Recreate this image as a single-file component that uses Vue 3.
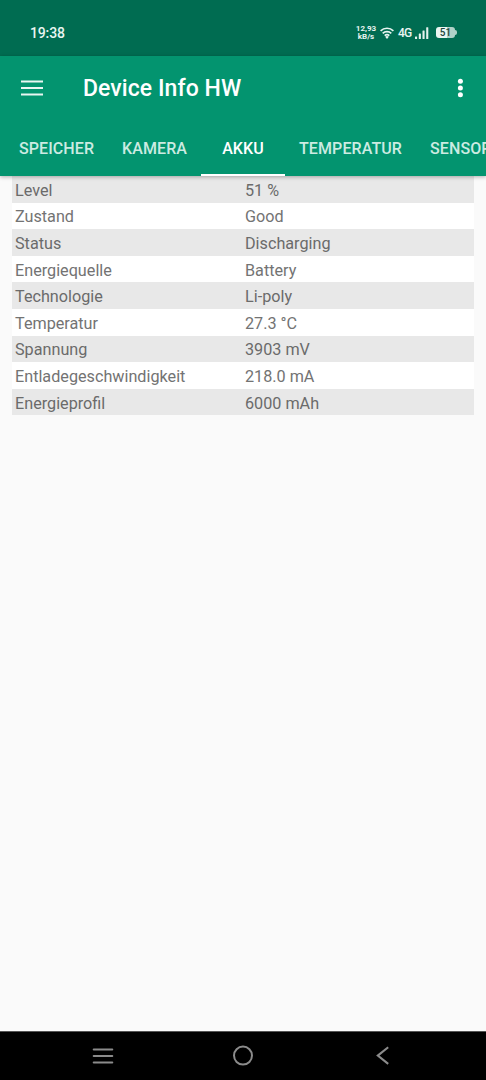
<script setup>
const tabs = [
  { name: 'SPEICHER', id: 'speicher' },
  { name: 'KAMERA', id: 'kamera' },
  { name: 'AKKU', id: 'akku', active: true },
  { name: 'TEMPERATUR', id: 'temperatur' },
  { name: 'SENSOREN', id: 'sensoren' },
]
const rows = [
  ['Level', '51 %'],
  ['Zustand', 'Good'],
  ['Status', 'Discharging'],
  ['Energiequelle', 'Battery'],
  ['Technologie', 'Li-poly'],
  ['Temperatur', '27.3 °C'],
  ['Spannung', '3903 mV'],
  ['Entladegeschwindigkeit', '218.0 mA'],
  ['Energieprofil', '6000 mAh'],
]
</script>

<template>
  <div class="screen">
    <div class="status">
      <span class="clock">19:38</span>
      <div class="indicators">
        <div class="speed"><span>12,93</span><span>kB/s</span></div>
        <svg class="wifi" width="14" height="12" viewBox="0 0 14 12" fill="none" stroke="#e9f5f1" stroke-width="1.7">
          <path d="M.6 3.8a9.3 9.3 0 0 1 12.8 0M2.7 6.3a6.2 6.2 0 0 1 8.6 0M4.7 8.6a3.4 3.4 0 0 1 4.6 0" />
          <path d="M5.2 9.7 7 11.9 8.8 9.7Q7 8.4 5.2 9.7Z" fill="#e9f5f1" stroke="none" />
        </svg>
        <span class="net">4G</span>
        <svg class="signal" width="14" height="12" viewBox="0 0 14 12" fill="#e3f2ed">
          <rect x="0" y="9.6" width="2.1" height="2.4" rx=".5" />
          <rect x="3.8" y="6.6" width="2.1" height="5.4" rx=".5" />
          <rect x="7.5" y="3.4" width="2.1" height="8.6" rx=".5" />
          <rect x="11.2" y=".2" width="2.1" height="11.8" rx=".5" />
        </svg>
        <div class="battery"><span>51</span></div>
      </div>
    </div>

    <header class="appbar">
      <div class="toolbar">
        <svg width="22" height="16" viewBox="0 0 22 16" fill="#e9f6f2">
          <path d="M0 .5h22v2H0zM0 7h22v2H0zM0 13.5h22v2H0z" />
        </svg>
        <h1>Device Info HW</h1>
        <svg width="6" height="20" viewBox="0 0 6 20" fill="#fff">
          <circle cx="3.4" cy="3.2" r="2.5" /><circle cx="3.4" cy="10" r="2.5" /><circle cx="3.4" cy="16.8" r="2.5" />
        </svg>
      </div>
      <nav class="tabs">
        <div v-for="t in tabs" :key="t.id" class="tab" :class="[t.id, { active: t.active }]">
          <span>{{ t.name }}</span>
        </div>
      </nav>
    </header>

    <main class="content">
      <div v-for="r in rows" :key="r[0]" class="row">
        <span class="label">{{ r[0] }}</span>
        <span class="value">{{ r[1] }}</span>
      </div>
    </main>

    <footer class="navbar">
      <svg width="22" height="22" viewBox="0 0 22 22" stroke="#8b8b8b" stroke-width="2.2" stroke-linecap="round">
        <path d="M1.8 4.5h18.4M1.8 11h18.4M1.8 17.5h18.4" />
      </svg>
      <svg width="22" height="22" viewBox="0 0 22 22" fill="none" stroke="#8b8b8b" stroke-width="2">
        <circle cx="11" cy="10.6" r="9" />
      </svg>
      <svg width="22" height="22" viewBox="0 0 22 22" fill="none" stroke="#8b8b8b" stroke-width="2.1">
        <path d="M16.2 2.3 5.8 10.6l10.4 8.3" />
      </svg>
    </footer>
  </div>
</template>

<style>
html, body { margin: 0; background: #fafafa; }
</style>

<style scoped>
.screen {
  width: 486px;
  height: 1080px;
  display: flex;
  flex-direction: column;
  overflow: hidden;
  background: #fafafa;
  font-family: Roboto, sans-serif;
}
.status {
  height: 55.5px;
  flex: none;
  box-sizing: border-box;
  padding: 10px 29px 0 30px;
  display: flex;
  align-items: center;
  justify-content: space-between;
  background: #006c51;
  color: #e9f5f1;
}
.clock { font-size: 14px; font-weight: 500; letter-spacing: -.15px; }
.indicators { display: flex; align-items: center; }
.speed {
  display: flex;
  flex-direction: column;
  align-items: center;
  width: 22px;
  font-size: 8px;
  line-height: 8px;
  font-weight: 700;
  margin-right: 3px;
}
.wifi { margin-right: 4px; }
.net { font-size: 12px; font-weight: 500; width: 17px; letter-spacing: -.8px; }
.battery {
  position: relative;
  width: 19px;
  height: 11px;
  margin: 0 2px 0 7px;
  border-radius: 3px;
  background: linear-gradient(90deg, #eaf5f1 0 56%, #b0d2c8 56%);
  color: #20453b;
  font-size: 10px;
  line-height: 11.5px;
  font-weight: 500;
  text-align: center;
}
.battery::after {
  content: '';
  position: absolute;
  left: 19px;
  top: 3px;
  width: 1.5px;
  height: 5px;
  border-radius: 0 2px 2px 0;
  background: #b0d2c8;
}
.appbar {
  flex: none;
  height: 120.5px;
  position: relative;
  z-index: 1;
  display: flex;
  flex-direction: column;
  background: #03946f;
  box-shadow: 0 1px 4px rgba(0, 0, 0, .3);
}
.toolbar {
  height: 65.5px;
  flex: none;
  box-sizing: border-box;
  display: flex;
  align-items: center;
  padding: 0 23px 0 21px;
}
h1 {
  flex: 1;
  margin: 0 0 0 40px;
  padding-top: 2px;
  color: #fff;
  font-size: 23px;
  line-height: 28px;
  font-weight: 500;
  letter-spacing: .07px;
}
.tabs { flex: 1; display: flex; color: #ccebe2; font-size: 16px; font-weight: 500; letter-spacing: .1px; }
.tab {
  flex: none;
  box-sizing: border-box;
  display: flex;
  align-items: center;
  justify-content: center;
  padding-top: 2px;
  border-bottom: 2.5px solid transparent;
}
.tab.active { color: #fff; border-color: #fff; }
.speicher { width: 113px; }
.kamera { width: 88px; padding-right: 5px; }
.akku { width: 84px; }
.temperatur { width: 131px; }
.sensoren { padding-left: 14px; }
.content { flex: 1; padding: 0 12px; }
.row {
  height: 26.6px;
  box-sizing: border-box;
  display: grid;
  grid-template-columns: 230px 1fr;
  align-items: center;
  padding: 2px 3px 0;
  background: #fff;
  color: #737373;
  font-size: 16.2px;
  line-height: 19px;
}
.row:nth-child(odd) { background: #e8e8e8; color: #6b6b6b; }
.navbar {
  flex: none;
  height: 49px;
  box-sizing: border-box;
  border-top: 1px solid #555;
  display: flex;
  align-items: center;
  justify-content: space-between;
  padding: 0 92px 0 91.5px;
  background: #000;
}
</style>
